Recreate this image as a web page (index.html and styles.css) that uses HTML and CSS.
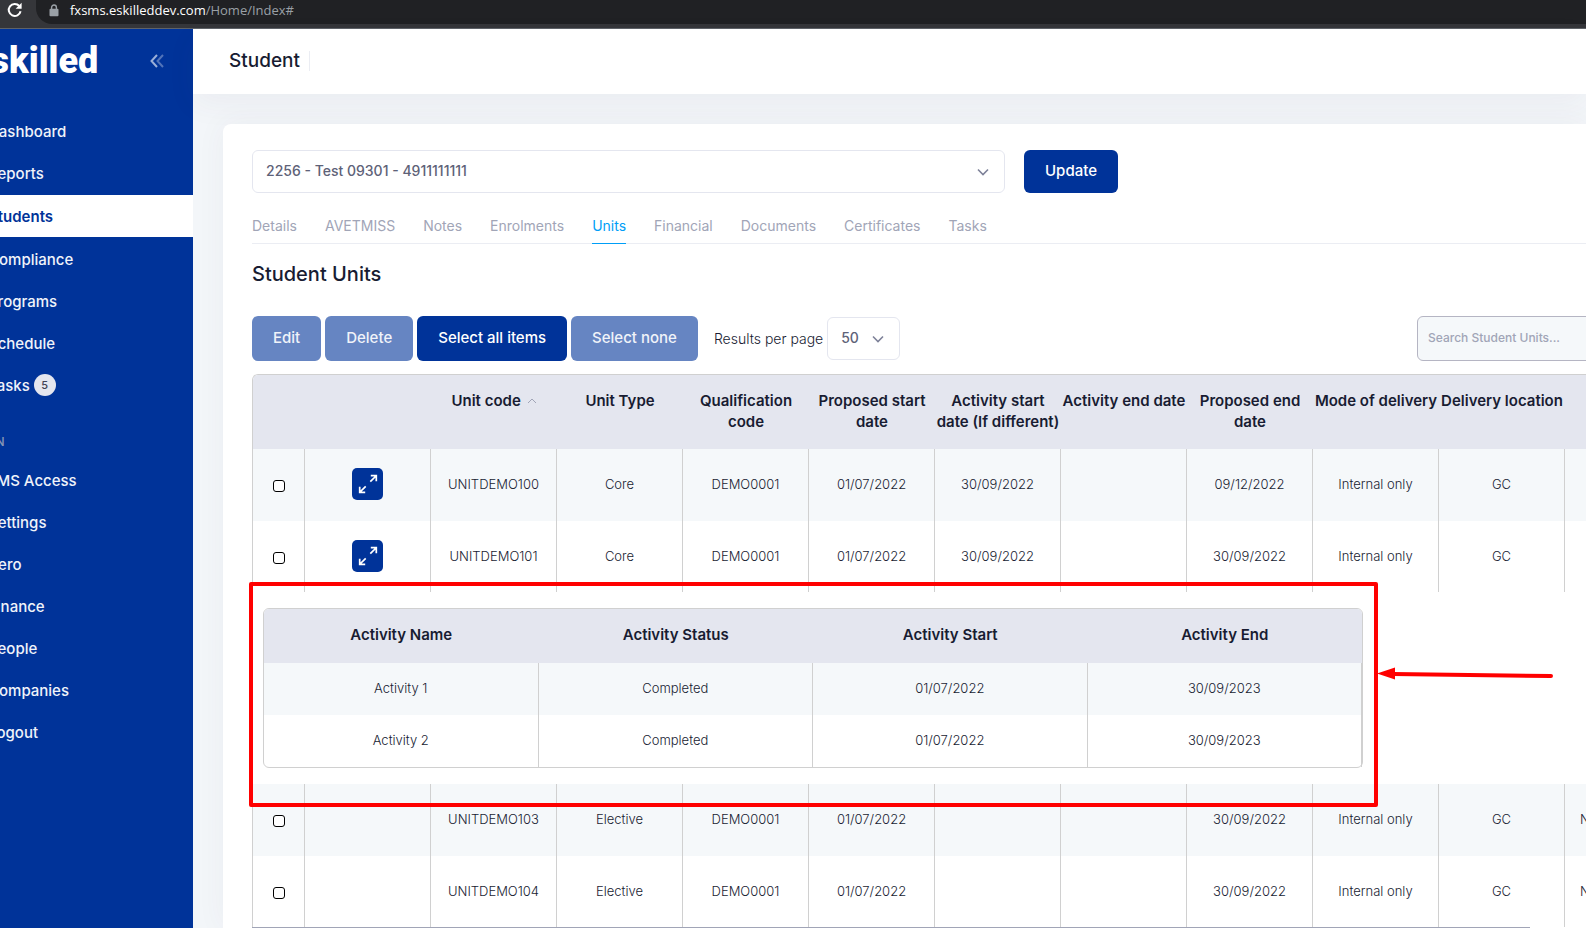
FILE: index.html
```
<!DOCTYPE html>
<html lang="en">
<head>
    <meta charset="UTF-8">
    <meta name="viewport" content="width=device-width, initial-scale=1.0">
    <title>Student Units</title>
    <link rel="stylesheet" href="styles.css">
</head>
<body>

    <div class="browser-bar">
        <button class="reload-btn" aria-label="Reload">
            <svg width="16" height="16" viewBox="0 0 16 16" fill="none">
                <path d="M13.6 9.2A6 6 0 1 1 12.3 4" stroke="#fff" stroke-width="2"/>
                <path d="M14.6 0.8v6H8.6z" fill="#fff"/>
            </svg>
        </button>
        <div class="address">
            <svg width="10" height="13" viewBox="0 0 10 13">
                <path d="M2.6 5.5V3.4a2.4 2.4 0 0 1 4.8 0v2.1" fill="none" stroke="#9aa0a6" stroke-width="1.4"/>
                <rect x="0.5" y="4.8" width="9" height="7.4" rx="1" fill="#9aa0a6"/>
            </svg>
            <span class="host">fxsms.eskilleddev.com</span><span class="path">/Home/Index#</span>
        </div>
    </div>

    <div class="app">
        <aside class="sidebar">
            <div class="brand">
                <span class="logo">eskilled</span>
                <button class="collapse-btn" aria-label="Collapse menu">
                    <svg width="14" height="14" viewBox="0 0 14 14" fill="none" stroke-width="2">
                        <path d="M7 1L1.5 7L7 13" stroke="#9aafd8"/>
                        <path d="M13 1L7.5 7L13 13" stroke="#5274b9"/>
                    </svg>
                </button>
            </div>
            <nav class="menu">
                <a href="#">Dashboard</a>
                <a href="#">Reports</a>
                <a href="#" class="active">Students</a>
                <a href="#">Compliance</a>
                <a href="#">Programs</a>
                <a href="#">Schedule</a>
                <a href="#">Tasks <span class="badge">5</span></a>
                <h4>ADMIN</h4>
                <a href="#">LMS Access</a>
                <a href="#">Settings</a>
                <a href="#">Xero</a>
                <a href="#">Finance</a>
                <a href="#">People</a>
                <a href="#">Companies</a>
                <a href="#">Logout</a>
            </nav>
        </aside>

        <div class="main">
            <header>
                <h1>Student</h1>
            </header>

            <div class="card">
                <div class="picker">
                    <select class="student-select" aria-label="Student">
                        <option>2256 - Test 09301 - 4911111111</option>
                    </select>
                    <button class="btn update-btn">Update</button>
                </div>

                <nav class="tabs">
                    <a href="#">Details</a>
                    <a href="#">AVETMISS</a>
                    <a href="#">Notes</a>
                    <a href="#">Enrolments</a>
                    <a href="#" class="active">Units</a>
                    <a href="#">Financial</a>
                    <a href="#">Documents</a>
                    <a href="#">Certificates</a>
                    <a href="#">Tasks</a>
                </nav>

                <h2>Student Units</h2>

                <div class="toolbar">
                    <button class="btn faded">Edit</button>
                    <button class="btn faded">Delete</button>
                    <button class="btn">Select all items</button>
                    <button class="btn faded">Select none</button>
                    <label for="perPage">Results per page</label>
                    <select id="perPage" class="page-select">
                        <option>50</option>
                    </select>
                    <input type="text" class="search" placeholder="Search Student Units..." aria-label="Search Student Units">
                </div>

                <table class="units">
                    <colgroup>
                        <col class="col-check">
                        <col class="col-data" span="10">
                        <col>
                    </colgroup>
                    <thead>
                        <tr>
                            <th></th>
                            <th></th>
                            <th>Unit code
                                <svg width="10" height="6" viewBox="0 0 10 6" fill="none"><path d="M1 5L5 1L9 5" stroke="#a1a5b7"/></svg>
                            </th>
                            <th>Unit Type</th>
                            <th>Qualification code</th>
                            <th>Proposed start date</th>
                            <th>Activity start date (If different)</th>
                            <th>Activity end date</th>
                            <th>Proposed end date</th>
                            <th>Mode of delivery</th>
                            <th>Delivery location</th>
                            <th></th>
                        </tr>
                    </thead>
                    <tbody>
                        <tr class="odd">
                            <td><input type="checkbox" aria-label="Select UNITDEMO100"></td>
                            <td>
                                <button class="expand-btn" aria-label="Expand">
                                    <svg width="20" height="20" viewBox="0 0 20 20" fill="none" stroke="#fff" stroke-width="1.7">
                                        <path d="M12.3 7.7L18 2M12.8 1.7H18.3V7.2M7.7 12.3L2 18M1.7 12.8V18.3H7.2"/>
                                    </svg>
                                </button>
                            </td>
                            <td>UNITDEMO100</td>
                            <td>Core</td>
                            <td>DEMO0001</td>
                            <td>01/07/2022</td>
                            <td>30/09/2022</td>
                            <td></td>
                            <td>09/12/2022</td>
                            <td>Internal only</td>
                            <td>GC</td>
                            <td></td>
                        </tr>
                        <tr>
                            <td><input type="checkbox" aria-label="Select UNITDEMO101"></td>
                            <td>
                                <button class="expand-btn" aria-label="Collapse">
                                    <svg width="20" height="20" viewBox="0 0 20 20" fill="none" stroke="#fff" stroke-width="1.7">
                                        <path d="M12.3 7.7L18 2M12.8 1.7H18.3V7.2M7.7 12.3L2 18M1.7 12.8V18.3H7.2"/>
                                    </svg>
                                </button>
                            </td>
                            <td>UNITDEMO101</td>
                            <td>Core</td>
                            <td>DEMO0001</td>
                            <td>01/07/2022</td>
                            <td>30/09/2022</td>
                            <td></td>
                            <td>30/09/2022</td>
                            <td>Internal only</td>
                            <td>GC</td>
                            <td></td>
                        </tr>
                        <tr class="details">
                            <td colspan="12">
                                <div class="details-box">
                                    <table class="activities">
                                        <thead>
                                            <tr>
                                                <th>Activity Name</th>
                                                <th>Activity Status</th>
                                                <th>Activity Start</th>
                                                <th>Activity End</th>
                                            </tr>
                                        </thead>
                                        <tbody>
                                            <tr class="odd">
                                                <td>Activity 1</td>
                                                <td>Completed</td>
                                                <td>01/07/2022</td>
                                                <td>30/09/2023</td>
                                            </tr>
                                            <tr>
                                                <td>Activity 2</td>
                                                <td>Completed</td>
                                                <td>01/07/2022</td>
                                                <td>30/09/2023</td>
                                            </tr>
                                        </tbody>
                                    </table>
                                    <div class="highlight"></div>
                                    <svg class="arrow" width="178" height="14" viewBox="0 0 178 14">
                                        <path d="M0 6.5L18 0.5V12.5z" fill="#f00"/>
                                        <path d="M16 7L174 9" stroke="#f00" stroke-width="4" stroke-linecap="round"/>
                                    </svg>
                                </div>
                            </td>
                        </tr>
                        <tr class="odd">
                            <td><input type="checkbox" aria-label="Select UNITDEMO103"></td>
                            <td></td>
                            <td>UNITDEMO103</td>
                            <td>Elective</td>
                            <td>DEMO0001</td>
                            <td>01/07/2022</td>
                            <td></td>
                            <td></td>
                            <td>30/09/2022</td>
                            <td>Internal only</td>
                            <td>GC</td>
                            <td class="cut">N</td>
                        </tr>
                        <tr>
                            <td><input type="checkbox" aria-label="Select UNITDEMO104"></td>
                            <td></td>
                            <td>UNITDEMO104</td>
                            <td>Elective</td>
                            <td>DEMO0001</td>
                            <td>01/07/2022</td>
                            <td></td>
                            <td></td>
                            <td>30/09/2022</td>
                            <td>Internal only</td>
                            <td>GC</td>
                            <td class="cut">N</td>
                        </tr>
                    </tbody>
                </table>
                <div class="scroll-line"></div>
            </div>
        </div>
    </div>

</body>
</html>
```
FILE: styles.css
```
* {
    box-sizing: border-box;
}

body {
    font-family: Inter, "Open Sans", sans-serif;
    font-size: 14px;
    color: #181c32;
    background-color: #f3f6f9;
    margin: 0;
    min-height: 100vh;
    overflow: hidden;
    display: flex;
    flex-direction: column;
}

h1, h2, h4 {
    margin: 0;
    font-weight: 500;
}

a {
    text-decoration: none;
}

button, select, input {
    font-family: inherit;
}

button {
    border: none;
    cursor: pointer;
}

/* browser bar */
.browser-bar {
    display: flex;
    height: 29px;
    background-color: #35363a;
    border-bottom: 1px solid #5f6368;
}

.reload-btn {
    background: none;
    padding: 2px 6px 0 0;
    width: 36px;
    height: 20px;
    line-height: 1;
    flex: none;
}

.address {
    flex: 1;
    display: flex;
    align-items: center;
    height: 24px;
    padding: 0 0 4px 13px;
    background-color: #202124;
    border-radius: 0 0 0 16px;
    font-family: "Open Sans", sans-serif;
    font-size: 13px;
}

.host {
    color: #fff;
    margin-left: 11px;
}

.path {
    color: #9aa0a6;
}

/* sidebar */
.app {
    flex: 1;
    display: flex;
}

.sidebar {
    flex: none;
    width: 193px;
    background-color: #003399;
    overflow: hidden;
}

.brand {
    display: flex;
    justify-content: space-between;
    align-items: center;
    height: 64px;
    margin-left: -29px;
    padding-right: 29px;
}

.logo {
    font-family: Roboto, sans-serif;
    font-size: 36px;
    font-weight: 900;
    color: #fff;
}

.collapse-btn {
    background: none;
    padding: 2px 0 0;
    line-height: 1;
}

.menu {
    padding-top: 17px;
}

.menu a {
    display: flex;
    align-items: center;
    height: 42px;
    margin-left: -12px;
    color: #f0f3fa;
    font-size: 15px;
    font-weight: 500;
}

.menu a.active {
    margin: 1px 0 1px;
    background-color: #fff;
    color: #003399;
    font-weight: 600;
    text-indent: -12px;
}

.menu h4 {
    height: 53px;
    padding-top: 28px;
    margin-left: -36px;
    font-size: 12px;
    color: #8895b5;
}

.badge {
    display: flex;
    align-items: center;
    justify-content: center;
    width: 22px;
    height: 22px;
    margin-left: 4px;
    border-radius: 50%;
    background-color: #e4e6ef;
    color: #3f4254;
    font-size: 11px;
}

/* page */
.main {
    flex: 1;
    min-width: 0;
}

header {
    display: flex;
    align-items: center;
    height: 65px;
    padding: 0 0 2px 36px;
    background-color: #fff;
    box-shadow: 0 10px 30px rgba(82, 63, 105, 0.05);
}

h1 {
    font-size: 19px;
    line-height: 20px;
    padding-right: 9px;
    border-right: 1px solid #ebedf3;
}

.card {
    margin: 30px 0 0 30px;
    padding: 26px 0 0 29px;
    background-color: #fff;
    border-radius: 8px 0 0 0;
    box-shadow: 0 0 30px rgba(82, 63, 105, 0.05);
    overflow: hidden;
}

.picker {
    display: flex;
    gap: 19px;
}

select {
    appearance: none;
    height: 43px;
    padding: 0 13px 2px;
    border: 1px solid #e4e6ef;
    border-radius: 6px;
    color: #5e6278;
    font-size: 14px;
    font-weight: 500;
    background: #fff url("data:image/svg+xml,%3Csvg xmlns='http://www.w3.org/2000/svg' width='12' height='8' fill='none'%3E%3Cpath d='M1 1.5L6 6.5L11 1.5' stroke='%237e8299' stroke-width='1.6'/%3E%3C/svg%3E") no-repeat right 15px center;
}

.student-select {
    width: 753px;
}

.btn {
    height: 45px;
    padding: 0 21px 3px;
    background-color: #003399;
    color: #fff;
    font-size: 15px;
    font-weight: 500;
    border-radius: 6px;
    white-space: nowrap;
}

.btn.faded {
    background-color: #6685c2;
    color: #f0f3f9;
}

.update-btn {
    height: 43px;
}

.tabs {
    display: flex;
    gap: 28px;
    margin-top: 16px;
    border-bottom: 1px solid #ebedf3;
}

.tabs a {
    height: 35px;
    margin-bottom: -1px;
    line-height: 34px;
    color: #a1a5b7;
}

.tabs a.active {
    color: #009ef7;
    border-bottom: 1px solid #009ef7;
}

h2 {
    margin-top: 14px;
    font-size: 20px;
    line-height: 32px;
}

.toolbar {
    display: flex;
    align-items: center;
    gap: 4px;
    margin: 26px 0 13px;
}

.toolbar label {
    margin-left: 12px;
    font-size: 14px;
    font-weight: 300;
}

.page-select {
    width: 73px;
}

.search {
    width: 181px;
    height: 45px;
    margin-left: auto;
    margin-right: -12px;
    padding: 0 10px 2px;
    border: 1px solid #b5b5c3;
    border-radius: 6px;
    background-color: #f5f8fa;
    font-size: 12px;
    font-weight: 500;
}

.search::placeholder {
    color: #a1a5b7;
}

/* tables */
table {
    width: 100%;
    table-layout: fixed;
    border-collapse: separate;
    border-spacing: 0;
    border: 1px solid #d0d0d0;
    border-radius: 6px;
}

.units {
    border-right: none;
    border-bottom: none;
    border-radius: 6px 0 0 0;
}

.col-check {
    width: 52px;
}

.col-data {
    width: 126px;
}

th {
    height: 74px;
    padding: 15px 0 0;
    vertical-align: top;
    background-color: #e4e6ef;
    font-size: 15px;
    font-weight: 600;
    line-height: 21px;
}

th:first-child {
    border-top-left-radius: 5px;
}

th svg {
    margin-left: 2px;
    vertical-align: 2px;
}

td {
    height: 71px;
    padding: 0 0 2px;
    text-align: center;
    font-size: 13px;
    font-weight: 300;
    border-right: 1px solid #d0d0d0;
}

.units > tbody > tr > td:last-child {
    border-right: none;
}

.odd td {
    height: 72px;
    background-color: #f5f8fa;
}

.units .cut {
    padding-left: 15px;
    text-align: left;
    overflow: hidden;
}

input[type="checkbox"] {
    appearance: none;
    width: 12px;
    height: 12px;
    margin: 2px 0 0;
    border: 1px solid #000;
    border-radius: 3px;
    background-color: #fff;
    vertical-align: middle;
}

.expand-btn {
    width: 31px;
    height: 32px;
    padding: 0;
    background-color: #003399;
    border-radius: 5px;
    line-height: 1;
    vertical-align: middle;
}

.expand-btn svg {
    vertical-align: middle;
}

.details > td {
    height: auto;
    padding: 0;
}

.details-box {
    position: relative;
    padding: 16px 10px;
}

.activities {
    width: 1100px;
}

.activities th {
    height: 54px;
}

.activities th:last-child {
    border-top-right-radius: 5px;
}

.activities td {
    height: 52px;
}

.activities td:last-child {
    border-right: 1px solid #d0d0d0;
}

/* red marker round the expanded activities */
.highlight {
    position: absolute;
    top: -10px;
    left: -4px;
    width: 1129px;
    height: 225px;
    border: 4px solid #f00;
    border-radius: 2px;
}

.arrow {
    position: absolute;
    top: 75px;
    left: 1124px;
}

.scroll-line {
    height: 1px;
    margin-right: 56px;
    background-color: #a1a5b7;
}
```
